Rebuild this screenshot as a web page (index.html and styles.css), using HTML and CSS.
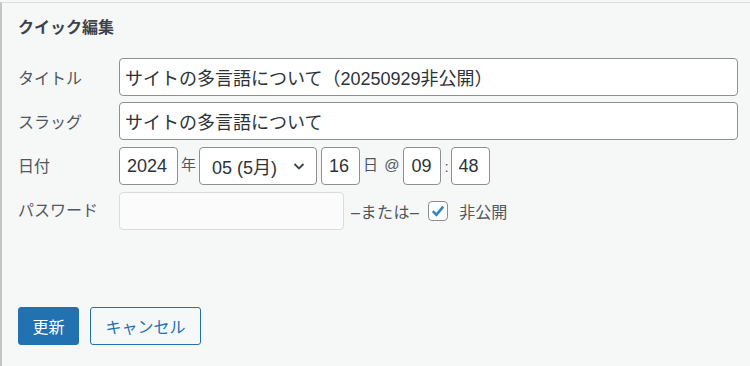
FILE: index.html
```html
<!DOCTYPE html>
<html lang="ja">
<head>
    <meta charset="UTF-8">
    <meta name="viewport" content="width=device-width, initial-scale=1.0">
    <title>クイック編集</title>
    <link rel="stylesheet" href="styles.css">
</head>
<body>
    <div class="quick-edit">
        <h2 class="legend">クイック編集</h2>

        <div class="fields">
            <label class="field-label" for="postTitle">タイトル</label>
            <input class="text-input" type="text" id="postTitle" value="サイトの多言語について（20250929非公開）">

            <label class="field-label" for="postSlug">スラッグ</label>
            <input class="text-input" type="text" id="postSlug" value="サイトの多言語について">

            <span class="field-label">日付</span>
            <div class="date-row">
                <input class="date-input year" type="text" value="2024">
                <span class="sep">年</span>
                <div class="month-select">
                    <span>05 (5月)</span>
                    <svg class="chevron" width="14" height="14" viewBox="0 0 14 14">
                        <path d="M2.5 5 L7 9.5 L11.5 5" fill="none" stroke="#3c434a" stroke-width="1.8"/>
                    </svg>
                </div>
                <input class="date-input day" type="text" value="16">
                <span class="sep at">日 @</span>
                <input class="date-input hour" type="text" value="09">
                <span class="sep colon">:</span>
                <input class="date-input minute" type="text" value="48">
            </div>

            <label class="field-label" for="postPass">パスワード</label>
            <div class="pass-row">
                <input class="pass-input" type="text" id="postPass" disabled>
                <span class="or-text">–または–</span>
                <span class="checkbox">
                    <svg width="16" height="16" viewBox="0 0 16 16">
                        <path d="M2.8 8.2 L6.4 11.8 L13.2 3.6" fill="none" stroke="#3582c4" stroke-width="2.6"/>
                    </svg>
                </span>
                <span class="private-text">非公開</span>
            </div>
        </div>

        <div class="actions">
            <button class="btn btn-primary">更新</button>
            <button class="btn btn-secondary">キャンセル</button>
        </div>
    </div>
</body>
</html>
```

FILE: styles.css
```css
body {
    margin: 0;
    padding: 0;
    background-color: #f6f7f7;
    font-family: "Liberation Sans", "Noto Sans CJK JP", sans-serif;
    color: #50575e;
    height: 366px;
    overflow: hidden;
}

.quick-edit {
    margin-top: 2px;
    border-top: 1px solid #dcdcde;
    border-left: 2px solid #c3c4c7;
    height: 100%;
    padding: 14px 0 0 16px;
    box-sizing: border-box;
}

.legend {
    margin: 0;
    font-size: 16px;
    font-weight: bold;
    line-height: 22px;
    color: #3c434a;
}

.fields {
    margin-top: 19px;
    display: grid;
    grid-template-columns: 101px 619px;
    grid-template-rows: 38px 38px 38px 38px;
    row-gap: 6px;
    align-items: center;
}

.field-label {
    font-size: 16px;
    color: #50575e;
}

.text-input,
.date-input,
.pass-input,
.month-select {
    height: 38px;
    box-sizing: border-box;
    border: 1px solid #8c8f94;
    border-radius: 4px;
    background-color: #fff;
    font-family: "Liberation Sans", "Noto Sans CJK JP", sans-serif;
    font-size: 18px;
    color: #2c3338;
    padding: 0 11px;
    margin: 0;
    outline: none;
}

.text-input {
    width: 100%;
    padding-left: 5px;
}

.date-row,
.pass-row {
    display: flex;
    align-items: center;
}

.date-row {
    margin-top: 2px;
}

.date-input {
    padding: 0 7px;
}

.year { width: 59px; }
.day { width: 39px; }
.hour { width: 38px; }
.minute { width: 39px; }

.sep {
    font-size: 15px;
    color: #50575e;
    margin: 0 3px;
    align-self: flex-start;
    padding-top: 6px;
}

.at {
    word-spacing: 2px;
    margin-right: 4px;
}

.colon {
    margin: 0 2px 0 3px;
    align-self: center;
    padding-top: 0;
}

.month-select {
    width: 118px;
    display: flex;
    align-items: center;
    justify-content: space-between;
    padding: 0 10px 0 12px;
    margin-right: 4px;
}

.chevron {
    display: block;
}

.pass-row {
    height: 38px;
    margin-top: 4px;
}

.pass-input {
    width: 225px;
    border-color: #dcdcde;
    background-color: rgba(255, 255, 255, 0.5);
}

.or-text {
    font-size: 16px;
    margin-left: 7px;
    letter-spacing: 0.5px;
}

.checkbox {
    width: 20px;
    height: 20px;
    box-sizing: border-box;
    border: 1px solid #8c8f94;
    border-radius: 4px;
    background-color: #fff;
    margin-left: 9px;
    display: flex;
    align-items: center;
    justify-content: center;
}

.private-text {
    font-size: 16px;
    margin-left: 11px;
}

.actions {
    margin-top: 79px;
    display: flex;
    gap: 11px;
}

.btn {
    height: 38px;
    box-sizing: border-box;
    border-radius: 3px;
    font-family: "Liberation Sans", "Noto Sans CJK JP", sans-serif;
    font-size: 16px;
    padding: 0 13px;
    cursor: pointer;
}

.btn-primary {
    width: 61px;
    border: 1px solid #2271b1;
    background-color: #2271b1;
    color: #fff;
}

.btn-secondary {
    width: 111px;
    border: 1px solid #2271b1;
    background-color: #f6f7f7;
    color: #2271b1;
}
```
